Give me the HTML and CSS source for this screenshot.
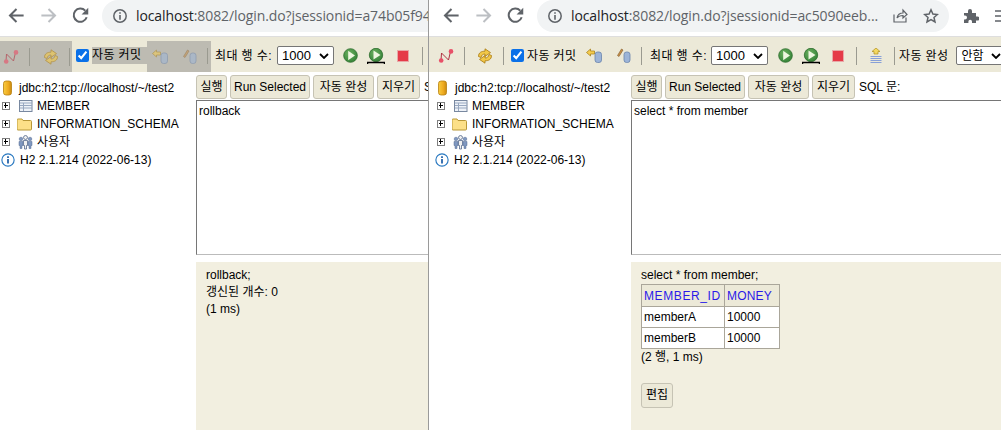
FILE: index.html
```html
<!DOCTYPE html>
<html lang="ko">
<head>
<meta charset="utf-8">
<title>H2 Console</title>
<link rel="stylesheet" href="styles.css">
</head>
<body>
<svg class="defs" width="0" height="0">
  <defs>
    <radialGradient id="g-play" cx=".4" cy=".35" r=".8"><stop offset="0" stop-color="#6cb060"/><stop offset="1" stop-color="#2a7a30"/></radialGradient>
    <linearGradient id="g-db" x1="0" x2="1" y1="0" y2="0"><stop offset="0" stop-color="#f8cc40"/><stop offset=".6" stop-color="#eeaa20"/><stop offset="1" stop-color="#c88a10"/></linearGradient>
    <symbol id="i-back" viewBox="0 0 16 16"><path d="M14 8H3M8 2.500 2.500 8 8 13.500" fill="none" stroke="currentColor" stroke-width="1.700"/></symbol>
    <symbol id="i-reload" viewBox="0 0 16 16"><path d="M13.200 9.500A5.600 5.600 0 1 1 12 3.900" fill="none" stroke="currentColor" stroke-width="1.700"/><path d="M14.500 1.500v5.600H8.900z" fill="currentColor"/></symbol>
    <symbol id="i-info" viewBox="0 0 16 16"><circle cx="8" cy="8" r="6.200" fill="none" stroke="currentColor" stroke-width="1.500"/><path d="M7.200 7h1.600v4.800H7.200zM7.200 4.200h1.600v1.600H7.200z" fill="currentColor"/></symbol>
    <symbol id="i-tree" viewBox="0 0 16 16"><path d="M3 12.500 3.500 5l7 7 2-8.500" fill="none" stroke="#b03040" stroke-width="1"/><circle cx="3.200" cy="12.500" r="2.300" fill="#e85068"/><circle cx="13" cy="3.400" r="2.300" fill="#e85068"/></symbol>
    <symbol id="i-sync" viewBox="0 0 16 16"><path d="M1.500 8.500C1.500 4.500 4.500 3.200 8 3.200V.8l5.500 3.800L8 8.400V6C6 6 4.500 7 4 9.500z" fill="#f2c848" stroke="#a87810" stroke-width=".8"/><path d="M14.500 7.500C14.500 11.500 11.500 12.800 8 12.800v2.400L2.500 11.400 8 7.600V10c2 0 3.500-1 4-3.500z" fill="#f2c848" stroke="#a87810" stroke-width=".8"/></symbol>
    <symbol id="i-rollback" viewBox="0 0 16 16"><path d="M.5 4.500 4.500 1v2h4v3h-4v2z" fill="#f4cc50" stroke="#a07810" stroke-width=".7"/><rect x="9" y="4" width="6.500" height="10.500" rx="2.500" fill="#9cb4d8" stroke="#6a84ac" stroke-width=".8"/></symbol>
    <symbol id="i-commit" viewBox="0 0 16 16"><path d="M2.500 7.500 6.500 1 8 2 4 8.500z" fill="#c89048" stroke="#805828" stroke-width=".6"/><rect x="9" y="4" width="6" height="10.500" rx="2.500" fill="#9cb4d8" stroke="#6a84ac" stroke-width=".8"/></symbol>
    <symbol id="i-play" viewBox="0 0 16 16"><circle cx="8" cy="8" r="7.300" fill="url(#g-play)" stroke="#2c6c2c" stroke-width=".8"/><path d="M5.500 3 12.800 8l-7.300 5z" fill="#eef6e0"/></symbol>
    <symbol id="i-runsel" viewBox="0 0 18 16"><circle cx="9" cy="7" r="6.700" fill="url(#g-play)" stroke="#2c6c2c" stroke-width=".8"/><path d="M6.500 2.500 13.500 7l-7 4.500z" fill="#eef6e0"/><path d="M.5 16v-1.500h17V16" fill="none" stroke="#000" stroke-width="1.500"/></symbol>
    <symbol id="i-stop" viewBox="0 0 16 16"><rect x="2.500" y="2.500" width="11" height="11" fill="#e53a48" stroke="#e8a8a8" stroke-width="1"/></symbol>
    <symbol id="i-hist" viewBox="0 0 16 16"><path d="M8 0 12 3.500H10V6H6V3.500H4z" fill="#f4d860" stroke="#b09020" stroke-width=".7"/><path d="M2.500 8.500h11M2.500 10.500h11M2.500 12.500h11M2.500 14.500h11" stroke="#88a0d8"/></symbol>
    <symbol id="i-db" viewBox="0 0 12 16"><rect x="1.500" y="1" width="8" height="14" rx="2.500" fill="url(#g-db)" stroke="#b88010" stroke-width=".8"/></symbol>
    <symbol id="i-table" viewBox="0 0 16 16"><rect x="2.500" y="2.500" width="12.500" height="11" fill="#eef2f8" stroke="#7888a0"/><path d="M3 5h12M3 7.500h12M3 10h12M6.500 5v8" stroke="#98a8c0"/></symbol>
    <symbol id="i-folder" viewBox="0 0 16 16"><path d="M0 4q0-1 1-1h4l1 1.500h7.500q1 0 1 1V13q0 1-1 1H1q-1 0-1-1z" fill="#fce088" stroke="#b89838"/></symbol>
    <symbol id="i-users" viewBox="0 0 16 16"><g fill="#8098c0" stroke="#506890" stroke-width=".5"><circle cx="4" cy="5" r="1.800"/><circle cx="13" cy="5" r="1.800"/><path d="M2 7.500h4v4H5v3H3v-3H2zM11 7.500h4v4h-1v3h-2v-3h-1z"/></g><circle cx="8.500" cy="3.500" r="2" fill="#f0f0f0" stroke="#405880" stroke-width=".7"/><path d="M6.500 6.500h4v5h-1v3.500h-2v-3.500h-1z" fill="#f0f0f0" stroke="#405880" stroke-width=".7"/></symbol>
    <symbol id="i-help" viewBox="0 0 16 16"><circle cx="8" cy="8" r="7" fill="#fff" stroke="#2878c0" stroke-width="1.300"/><path d="M7 6.800h2V12H7zM7 3.800h2v1.800H7z" fill="#2060a8"/></symbol>
  </defs>
</svg>

<div class="desktop">
  <section class="window window-left">
    <header class="chrome">
      <svg class="nav nav-first"><use href="#i-back"/></svg>
      <svg class="nav nav-off"><use href="#i-back" transform="matrix(-1 0 0 1 19 0)"/></svg>
      <svg class="nav"><use href="#i-reload"/></svg>
      <div class="omnibox omnibox-cut">
        <svg class="site-info"><use href="#i-info"/></svg>
        <span class="url"><b>localhost</b>:8082/login.do?jsessionid=a74b05f94</span>
      </div>
    </header>
    <div class="toolbar toolbar-left">
      <span class="shade shade-a">
        <svg class="tb-icon"><use href="#i-tree"/></svg>
        <i class="sep sep-a"></i>
        <svg class="tb-icon tb-sync"><use href="#i-sync"/></svg>
        <i class="sep sep-b"></i>
      </span>
      <input class="auto" type="checkbox" checked>
      <span class="mark">자동 커밋</span>
      <span class="shade shade-b">
        <svg class="tb-icon"><use href="#i-rollback"/></svg>
        <svg class="tb-icon tb-cm"><use href="#i-commit"/></svg>
      </span>
      <i class="sep sep-c"></i>
      <span class="label">최대 행 수:</span>
      <span class="select sel-max">1000<svg class="chev" viewBox="0 0 10 6"><path d="M1 1l4 4 4-4" fill="none" stroke="#000" stroke-width="1.800"/></svg></span>
      <svg class="tb-icon tb-run"><use href="#i-play"/></svg>
      <svg class="run-sel"><use href="#i-runsel"/></svg>
      <svg class="tb-icon tb-stop"><use href="#i-stop"/></svg>
      <i class="sep sep-d"></i>
    </div>
    <div class="workspace">
      <aside class="tree">
        <div class="node"><svg class="ic-db"><use href="#i-db"/></svg>jdbc:h2:tcp://localhost/~/test2</div>
        <div class="node caps"><span class="plus"></span><svg class="ic"><use href="#i-table"/></svg>MEMBER</div>
        <div class="node caps"><span class="plus"></span><svg class="ic"><use href="#i-folder"/></svg>INFORMATION_SCHEMA</div>
        <div class="node"><span class="plus"></span><svg class="ic"><use href="#i-users"/></svg>사용자</div>
        <div class="node"><svg class="ic-help"><use href="#i-help"/></svg>H2 2.1.214 (2022-06-13)</div>
      </aside>
      <main class="query">
        <div class="btns">
          <button class="btn b-run">실행</button>
          <button class="btn b-sel">Run Selected</button>
          <button class="btn b-auto">자동 완성</button>
          <button class="btn b-clr">지우기</button>
          <span class="sql">SQL 문:</span>
        </div>
        <div class="editor">rollback</div>
        <div class="result">
          <div>rollback;</div>
          <div>갱신된 개수: 0</div>
          <div>(1 ms)</div>
        </div>
      </main>
    </div>
  </section>

  <section class="window window-right">
    <header class="chrome">
      <svg class="nav nav-first"><use href="#i-back"/></svg>
      <svg class="nav nav-off"><use href="#i-back" transform="matrix(-1 0 0 1 19 0)"/></svg>
      <svg class="nav"><use href="#i-reload"/></svg>
      <div class="omnibox omnibox-full">
        <svg class="site-info"><use href="#i-info"/></svg>
        <span class="url"><b>localhost</b>:8082/login.do?jsessionid=ac5090eeb...</span>
        <svg class="omni-share" viewBox="0 0 16 16"><path d="M2 6.500V14h12V9.500M5 10q1-5 6-5V2l4 4.500L11 10V7.500Q7 7.500 5 10z" fill="none" stroke="#5f6368" stroke-width="1.200"/></svg>
        <svg class="omni-star" viewBox="0 0 16 16"><path d="M8 1.800l1.900 4.200 4.500.5-3.400 3 1 4.500L8 11.700 4 14l1-4.500-3.400-3 4.500-.5z" fill="none" stroke="#5f6368" stroke-width="1.500"/></svg>
      </div>
      <svg class="ext" viewBox="0 0 16 16"><path d="M1 5h4V3a2 2 0 0 1 4 0v2h4v3.500h1.500a2 2 0 0 1 0 4H13V15H9v-1.500a1.800 1.800 0 0 0-3.600 0V15H1v-3.500h1a2 2 0 0 0 0-4H1z" fill="#5f6368"/></svg>
      <svg class="menu" viewBox="0 0 6 16"><path d="M0 3h6M0 8h6M0 13h6" stroke="#5f6368" stroke-width="1.500"/></svg>
    </header>
    <div class="toolbar toolbar-right">
      <svg class="tb-icon"><use href="#i-tree"/></svg>
      <i class="sep r-sep-a"></i>
      <svg class="tb-icon r-sync"><use href="#i-sync"/></svg>
      <i class="sep r-sep-b"></i>
      <input class="auto r-auto" type="checkbox" checked>
      <span class="label r-commit">자동 커밋</span>
      <svg class="tb-icon r-rb"><use href="#i-rollback"/></svg>
      <svg class="tb-icon tb-cm"><use href="#i-commit"/></svg>
      <i class="sep r-sep-c"></i>
      <span class="label r-max">최대 행 수:</span>
      <span class="select sel-max r-sel">1000<svg class="chev" viewBox="0 0 10 6"><path d="M1 1l4 4 4-4" fill="none" stroke="#000" stroke-width="1.800"/></svg></span>
      <svg class="tb-icon tb-run r-run"><use href="#i-play"/></svg>
      <svg class="run-sel"><use href="#i-runsel"/></svg>
      <svg class="tb-icon tb-stop"><use href="#i-stop"/></svg>
      <i class="sep sep-d r-sep-d"></i>
      <svg class="tb-icon r-hist"><use href="#i-hist"/></svg>
      <i class="sep r-sep-e"></i>
      <span class="label r-ac">자동 완성</span>
      <span class="select sel-ac">안함<svg class="chev" viewBox="0 0 10 6"><path d="M1 1l4 4 4-4" fill="none" stroke="#000" stroke-width="1.800"/></svg></span>
    </div>
    <div class="workspace">
      <aside class="tree tree-right">
        <div class="node"><svg class="ic-db"><use href="#i-db"/></svg>jdbc:h2:tcp://localhost/~/test2</div>
        <div class="node caps"><span class="plus"></span><svg class="ic"><use href="#i-table"/></svg>MEMBER</div>
        <div class="node caps"><span class="plus"></span><svg class="ic"><use href="#i-folder"/></svg>INFORMATION_SCHEMA</div>
        <div class="node"><span class="plus"></span><svg class="ic"><use href="#i-users"/></svg>사용자</div>
        <div class="node"><svg class="ic-help"><use href="#i-help"/></svg>H2 2.1.214 (2022-06-13)</div>
      </aside>
      <main class="query">
        <div class="btns">
          <button class="btn b-run">실행</button>
          <button class="btn b-sel">Run Selected</button>
          <button class="btn b-auto">자동 완성</button>
          <button class="btn b-clr">지우기</button>
          <span class="sql">SQL 문:</span>
        </div>
        <div class="editor">select * from member</div>
        <div class="result">
          <div>select * from member;</div>
          <table class="grid">
            <thead><tr><th>MEMBER_ID</th><th>MONEY</th></tr></thead>
            <tbody>
              <tr><td>memberA</td><td>10000</td></tr>
              <tr><td>memberB</td><td>10000</td></tr>
            </tbody>
          </table>
          <div>(2 행, 1 ms)</div>
          <button class="btn b-edit">편집</button>
        </div>
      </main>
    </div>
  </section>
</div>
</body>
</html>
```
FILE: styles.css
```css
* { box-sizing: border-box; }
html, body { margin: 0; padding: 0; }
body {
  width: 1001px;
  height: 430px;
  overflow: hidden;
  background: #fff;
  color: #000;
  font: 12px/16px "Liberation Sans", "Noto Sans CJK KR", sans-serif;
}
.defs { position: absolute; }
.desktop { display: flex; height: 430px; }
.window { display: flex; flex-direction: column; height: 430px; overflow: hidden; flex: none; }
.window-left { width: 429px; border-right: 1px solid #9a9a9a; }
.window-right { width: 572px; }

.chrome { display: flex; align-items: flex-start; height: 37px; flex: none; background: #fff; border-bottom: 1px solid #dedede; }
.nav { width: 19px; height: 19px; margin: 6px 0 0 13px; color: #5f6368; flex: none; }
.nav-first { margin-left: 7px; }
.window-right .nav-first { margin-left: 13px; }
.nav-off { color: #bcbfc3; }
.omnibox { display: flex; align-items: center; height: 32px; margin-left: 12px; background: #f1f3f4; flex: none; }
.omnibox-cut { width: 326px; border-radius: 16px 0 0 16px; padding-left: 10px; overflow: hidden; }
.omnibox-full { width: 412px; border-radius: 16px; padding: 0 10px; }
.site-info { width: 16px; height: 16px; color: #5f6368; flex: none; }
.url { margin-left: 8px; font: 14px/20px "Open Sans", "Noto Sans", sans-serif; color: #5f6368; white-space: nowrap; letter-spacing: -.1px; }
.url b { font-weight: 400; color: #202124; }
.omni-share { width: 16px; height: 16px; margin-left: auto; flex: none; }
.omni-star { width: 16px; height: 16px; margin-left: 15px; flex: none; }
.ext { width: 16px; height: 16px; margin: 8px 0 0 14px; flex: none; }
.menu { width: 6px; height: 16px; margin: 8px 0 0 16px; flex: none; }

.toolbar { display: flex; align-items: center; height: 36px; padding-top: 2px; flex: none; background: #ece9d8; white-space: nowrap; overflow: hidden; border-bottom: 1px solid #fff; }
.toolbar-right { padding-left: 9px; }
.tb-icon { width: 16px; height: 16px; flex: none; display: block; }
.sep { display: block; width: 1px; height: 18px; background: #9a9a90; flex: none; }
.label { flex: none; letter-spacing: .4px; }
.shade { display: flex; align-items: center; height: 31px; background: #bdbbb2; flex: none; align-self: flex-end; }
.shade-a { width: 72px; padding-left: 3px; }
.shade-a .tb-icon { opacity: .62; }
.sep-a { margin-left: 10px; }
.tb-sync { margin-left: 13px; }
.sep-b { margin-left: 10px; }
.auto { width: 13px; height: 13px; margin: 0 0 0 4px; accent-color: #0a70e8; flex: none; }
.mark { margin-left: 3px; background: #bdbbb2; width: 55px; flex: none; line-height: 17px; letter-spacing: .4px; }
.shade-b { width: 64px; padding-left: 5px; }
.shade-b .tb-icon { opacity: .55; }
.tb-cm { margin-left: 13px; }
.sep-c { margin-left: -4px; height: 16px; }
.toolbar-left .label { margin-left: 7px; }
.sel-max { margin-left: 5px; width: 57px; }
.select { display: flex; align-items: center; justify-content: space-between; height: 19px; padding: 0 4px; background: #fff; border: 1px solid #767676; border-radius: 2px; font-size: 13px; flex: none; }
.chev { width: 10px; height: 6px; flex: none; }
.tb-run { margin-left: 9px; width: 15px; height: 15px; }
.run-sel { display: block; margin-left: 9px; width: 18px; height: 16px; flex: none; }
.tb-stop { margin-left: 10px; }
.sep-d { margin-left: 11px; }
.r-sep-a { margin-left: 10px; }
.r-sync { margin-left: 12px; }
.r-sep-b { margin-left: 10px; }
.r-auto { margin-left: 7px; }
.r-commit { margin-left: 3px; width: 50px; }
.r-rb { margin-left: 9px; }
.r-sep-c { margin-left: 10px; }
.r-max { margin-left: 8px; }
.r-sel { margin-left: 4px; }
.r-run { margin-left: 10px; }
.r-sep-d { margin-left: 10px; }
.r-hist { margin-left: 11px; }
.r-sep-e { margin-left: 10px; }
.r-ac { margin-left: 4px; }
.sel-ac { margin-left: 8px; width: 50px; font-size: 12px; }

.workspace { display: flex; flex: 1; min-height: 0; }
.tree { width: 196px; flex: none; padding: 6px 0 0 2px; white-space: nowrap; }
.tree-right { width: 202px; padding-left: 8px; }
.node { display: flex; align-items: center; height: 18px; }
.caps { letter-spacing: .04px; }
.plus { position: relative; display: block; width: 8px; height: 8px; border: 1px solid #808080; margin-right: 7px; flex: none; background: #fff; }
.plus::before { content: ""; position: absolute; left: 1px; right: 1px; top: 2px; height: 1px; background: #000; }
.plus::after { content: ""; position: absolute; top: 0; bottom: 1px; left: 2px; width: 1px; background: #000; }
.ic { width: 16px; height: 16px; margin-right: 4px; flex: none; }
.ic-db { width: 12px; height: 16px; margin-right: 5px; flex: none; }
.tree-right .ic-db { margin-right: 6px; }
.ic-help { width: 14px; height: 14px; margin: 0 5px 0 -1px; flex: none; }
.tree-right .ic-help { margin-left: -2px; }

.query { flex: 1; min-width: 0; display: flex; flex-direction: column; overflow: hidden; }
.btns { display: flex; align-items: center; height: 27px; flex: none; white-space: nowrap; }
.btn { font: inherit; height: 24px; padding: 0; margin-right: 3px; background: #ece9d8; border: 1px solid #c6c3b4; border-radius: 3px; color: #000; flex: none; }
.b-run { width: 31px; }
.b-sel { width: 80px; }
.b-auto { width: 61px; }
.b-clr { width: 43px; }
.sql { margin-left: 1px; }
.editor { height: 155px; flex: none; padding: 2px; border: 1px solid #767676; border-right: 0; border-bottom: 1px solid #bbb; background: #fff; }
.result { flex: 1; margin-top: 7px; padding: 5px 10px; background: #f2efe0; line-height: 17px; }
.grid { border-collapse: collapse; margin: 0; line-height: 16px; }
.grid th, .grid td { border: 1px solid #aaa69a; padding: 2px; height: 21px; text-align: left; font-weight: 400; background: #fff; }
.grid th { height: 22px; background: #ece9d8; color: #2a1ae8; }
.grid th:first-child { width: 83px; letter-spacing: .6px; }
.grid th:last-child { width: 55px; letter-spacing: .2px; }
.b-edit { display: block; width: 32px; height: 25px; margin: 17px 0 0; }
```
